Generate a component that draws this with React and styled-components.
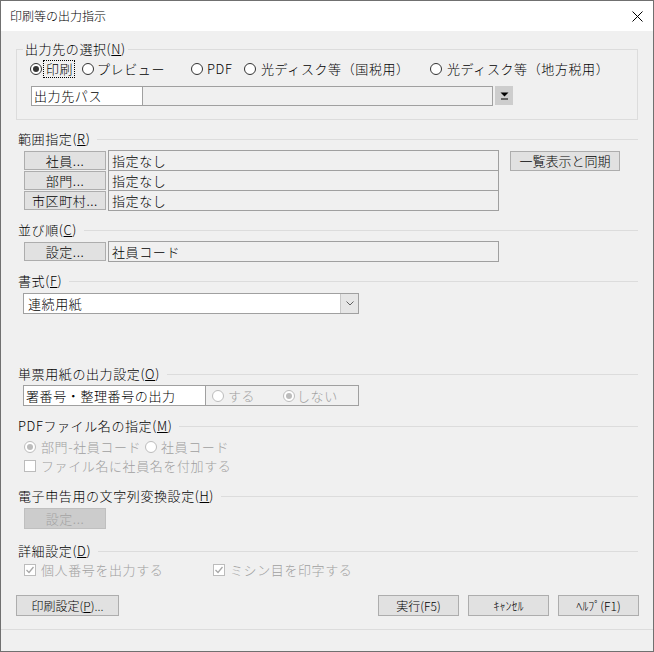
import React from 'react';
import styled, { createGlobalStyle } from 'styled-components';

const FONT = `"Noto Sans CJK JP", "Noto Sans", sans-serif`;

const GlobalStyle = createGlobalStyle`
  html, body { margin: 0; padding: 0; background: #ffffff; }
  body { font-family: ${FONT}; }
  *, *::before, *::after { box-sizing: border-box; }
`;

const Window = styled.div`
  width: 654px;
  height: 652px;
  border: 1px solid #707070;
  display: flex;
  flex-direction: column;
  background: #f0f0f0;
  font-family: ${FONT};
  font-size: 13px;
  font-weight: 300;
  line-height: 16px;
  letter-spacing: 0.6px;
  color: #000;
`;

const TitleBar = styled.div`
  height: 30px;
  flex: none;
  background: #ffffff;
  display: flex;
  align-items: center;
  justify-content: space-between;
  padding: 0 10px 0 9px;
`;

const Title = styled.span`
  font-size: 12px;
  letter-spacing: 0;
`;

const Content = styled.div`
  flex: 1;
  display: flex;
  flex-direction: column;
  padding: 0 15px;
`;

const Group = styled.fieldset`
  margin: 10px 0 0;
  padding: 0;
  min-width: 0;
  border: 1px solid #dcdcdc;
`;

const Legend = styled.legend`
  margin-left: 6px;
  padding: 0 2px;
  line-height: 16px;
`;

const GroupInner = styled.div`
  padding: 4px 0 13px 13px;
  display: flex;
  flex-direction: column;
`;

const OptionRow = styled.div`
  display: flex;
  align-items: center;
  height: 16px;
  margin: ${p => p.$mt ?? 0}px 0 0 ${p => p.$ml ?? 0}px;
`;

const Option = styled.label`
  display: inline-flex;
  align-items: center;
  flex: none;
  gap: ${p => p.$gap ?? 4}px;
  width: ${p => (p.$w ? `${p.$w}px` : 'auto')};
  color: ${p => (p.$disabled ? '#a0a0a0' : '#000')};
  white-space: nowrap;
`;

const RadioCircle = styled.span`
  width: 12px;
  height: 12px;
  flex: none;
  border-radius: 50%;
  border: 1px solid ${p => (p.$disabled ? '#bcbcbc' : '#333333')};
  background: #ffffff;
  display: inline-flex;
  align-items: center;
  justify-content: center;
  &::after {
    content: '';
    width: 6px;
    height: 6px;
    border-radius: 50%;
    background: ${p => (p.$disabled ? '#bcbcbc' : '#333333')};
    display: ${p => (p.$checked ? 'block' : 'none')};
  }
`;

const CheckBox = styled.span`
  width: 12px;
  height: 12px;
  flex: none;
  border: 1px solid ${p => (p.$disabled ? '#bcbcbc' : '#333333')};
  background: #ffffff;
  display: inline-flex;
  align-items: center;
  justify-content: center;
`;

const Focus = styled.span`
  outline: 1px dotted #000;
  outline-offset: 0;
  padding: 0 1px 0 2px;
`;

const PathRow = styled.div`
  display: flex;
  align-items: flex-start;
  margin: 9px 0 0 1px;
  height: 20px;
`;

const PathLabel = styled.div`
  width: 112px;
  height: 20px;
  background: #ffffff;
  border: 1px solid #a0a0a0;
  padding-left: 2px;
  display: flex;
  align-items: center;
`;

const PathField = styled.div`
  width: 351px;
  height: 20px;
  margin-left: -1px;
  background: #f0f0f0;
  border: 1px solid #a0a0a0;
`;

const PathDrop = styled.div`
  width: 18px;
  height: 19px;
  margin-left: 2px;
  background: #cdcdcd;
  display: flex;
  align-items: center;
  justify-content: center;
`;

const SectionHeader = styled.div`
  display: flex;
  align-items: center;
  height: 16px;
  margin: ${p => p.$mt}px 0 0 2px;
  white-space: nowrap;
  &::after {
    content: '';
    flex: 1;
    height: 1px;
    background: #dcdcdc;
    margin-left: 7px;
  }
`;

const RangeArea = styled.div`
  display: flex;
  align-items: flex-start;
  margin: 3px 0 0 8px;
`;

const RangeTable = styled.div`
  display: flex;
  flex-direction: column;
`;

const RangeRow = styled.div`
  display: flex;
  align-items: center;
  height: 21px;
  & + & { margin-top: -1px; }
`;

const PickButton = styled.div`
  width: 82px;
  height: 19px;
  background: #e1e1e1;
  border: 1px solid #adadad;
  display: flex;
  align-items: center;
  justify-content: center;
`;

const Field = styled.div`
  width: 391px;
  height: 21px;
  margin-left: 2px;
  background: #f0f0f0;
  border: 1px solid #a0a0a0;
  padding-left: 3px;
  display: flex;
  align-items: center;
`;

const SyncButton = styled.div`
  width: 110px;
  height: 20px;
  margin: 1px 0 0 11px;
  background: #e1e1e1;
  border: 1px solid #adadad;
  display: flex;
  align-items: center;
  justify-content: center;
  letter-spacing: 0;
`;

const Select = styled.div`
  width: 336px;
  height: 21px;
  margin: 4px 0 0 7px;
  background: #ffffff;
  border: 1px solid #a0a0a0;
  display: flex;
  align-items: stretch;
`;

const SelectText = styled.div`
  flex: 1;
  padding-left: 4px;
  display: flex;
  align-items: center;
`;

const SelectArrow = styled.div`
  width: 18px;
  background: #e6e6e6;
  border-left: 1px solid #c8c8c8;
  display: flex;
  align-items: center;
  justify-content: center;
`;

const SlipRow = styled.div`
  display: flex;
  width: 336px;
  height: 21px;
  margin: 3px 0 0 7px;
`;

const SlipLabel = styled.div`
  width: 183px;
  background: #ffffff;
  border: 1px solid #a0a0a0;
  padding-left: 2px;
  display: flex;
  align-items: center;
`;

const SlipOptions = styled.div`
  flex: 1;
  margin-left: -1px;
  border: 1px solid #a0a0a0;
  background: #f0f0f0;
  display: flex;
  align-items: center;
  padding-left: 6px;
`;

const DisabledButton = styled.div`
  width: 82px;
  height: 21px;
  margin: 4px 0 0 8px;
  background: #cccccc;
  border: 1px solid #bfbfbf;
  color: #a3a3a3;
  display: flex;
  align-items: center;
  justify-content: center;
`;

const Footer = styled.div`
  display: flex;
  justify-content: space-between;
  margin-top: 17px;
`;

const FooterGroup = styled.div`
  display: flex;
  gap: 9px;
  margin-right: -1px;
`;

const DialogButton = styled.div`
  width: ${p => p.$w ?? 81}px;
  height: 21px;
  background: #e1e1e1;
  border: 1px solid #adadad;
  display: flex;
  align-items: center;
  justify-content: center;
  font-size: 12px;
  letter-spacing: 0;
`;

const StatusBar = styled.div`
  height: 22px;
  flex: none;
  border-top: 1px solid #dcdcdc;
`;

const Radio = ({ checked, disabled, children, w, gap, focus }) => (
  <Option $w={w} $gap={gap} $disabled={disabled}>
    <RadioCircle $checked={checked} $disabled={disabled} />
    {focus ? <Focus>{children}</Focus> : children}
  </Option>
);

const Check = ({ checked, disabled, children, w, gap }) => (
  <Option $w={w} $gap={gap} $disabled={disabled}>
    <CheckBox $disabled={disabled}>
      {checked && (
        <svg width="10" height="10" viewBox="0 0 10 10">
          <polyline points="1.5,5 4,7.5 8.5,2" fill="none" stroke={disabled ? '#a8a8a8' : '#000'} strokeWidth="1.3" />
        </svg>
      )}
    </CheckBox>
    {children}
  </Option>
);

export default function App() {
  return (
    <>
      <GlobalStyle />
      <Window>
        <TitleBar>
          <Title>印刷等の出力指示</Title>
          <svg width="11" height="11" viewBox="0 0 11 11">
            <line x1="0.5" y1="0.5" x2="10.5" y2="10.5" stroke="#000" strokeWidth="1" />
            <line x1="10.5" y1="0.5" x2="0.5" y2="10.5" stroke="#000" strokeWidth="1" />
          </svg>
        </TitleBar>
        <Content>
          <Group>
            <Legend>出力先の選択(<u>N</u>)</Legend>
            <GroupInner>
              <OptionRow>
                <Radio checked w={52} gap={2} focus>印刷</Radio>
                <Radio w={109} gap={3}>プレビュー</Radio>
                <Radio w={53} gap={4}>PDF</Radio>
                <Radio w={186} gap={5}>光ディスク等（国税用）</Radio>
                <Radio gap={5}>光ディスク等（地方税用）</Radio>
              </OptionRow>
              <PathRow>
                <PathLabel>出力先パス</PathLabel>
                <PathField />
                <PathDrop>
                  <svg width="9" height="8" viewBox="0 0 9 8">
                    <polygon points="0.5,0.5 8.5,0.5 4.5,4.5" fill="#000" />
                    <line x1="1" y1="7" x2="8" y2="7" stroke="#000" strokeWidth="1" />
                  </svg>
                </PathDrop>
              </PathRow>
            </GroupInner>
          </Group>

          <SectionHeader $mt={11}>範囲指定(<u>R</u>)</SectionHeader>
          <RangeArea>
            <RangeTable>
              <RangeRow>
                <PickButton>社員...</PickButton>
                <Field>指定なし</Field>
              </RangeRow>
              <RangeRow>
                <PickButton>部門...</PickButton>
                <Field>指定なし</Field>
              </RangeRow>
              <RangeRow>
                <PickButton>市区町村...</PickButton>
                <Field>指定なし</Field>
              </RangeRow>
            </RangeTable>
            <SyncButton>一覧表示と同期</SyncButton>
          </RangeArea>

          <SectionHeader $mt={11}>並び順(<u>C</u>)</SectionHeader>
          <RangeArea>
            <RangeRow>
              <PickButton>設定...</PickButton>
              <Field>社員コード</Field>
            </RangeRow>
          </RangeArea>

          <SectionHeader $mt={11}>書式(<u>F</u>)</SectionHeader>
          <Select>
            <SelectText>連続用紙</SelectText>
            <SelectArrow>
              <svg width="8" height="5" viewBox="0 0 8 5">
                <polyline points="0.5,0.5 4,4 7.5,0.5" fill="none" stroke="#606060" strokeWidth="1" />
              </svg>
            </SelectArrow>
          </Select>

          <SectionHeader $mt={52}>単票用紙の出力設定(<u>O</u>)</SectionHeader>
          <SlipRow>
            <SlipLabel>署番号・整理番号の出力</SlipLabel>
            <SlipOptions>
              <Radio disabled w={71} gap={4}>する</Radio>
              <Radio disabled checked gap={2}>しない</Radio>
            </SlipOptions>
          </SlipRow>

          <SectionHeader $mt={12}>PDFファイル名の指定(<u>M</u>)</SectionHeader>
          <OptionRow $mt={5} $ml={8}>
            <Radio disabled checked w={121} gap={5}>部門-社員コード</Radio>
            <Radio disabled gap={4}>社員コード</Radio>
          </OptionRow>
          <OptionRow $mt={3} $ml={8}>
            <Check disabled gap={5}>ファイル名に社員名を付加する</Check>
          </OptionRow>

          <SectionHeader $mt={14}>電子申告用の文字列変換設定(<u>H</u>)</SectionHeader>
          <DisabledButton>設定...</DisabledButton>

          <SectionHeader $mt={14}>詳細設定(<u>D</u>)</SectionHeader>
          <OptionRow $mt={3} $ml={8}>
            <Check disabled checked w={189} gap={5}>個人番号を出力する</Check>
            <Check disabled checked gap={5}>ミシン目を印字する</Check>
          </OptionRow>

          <Footer>
            <DialogButton $w={103}>印刷設定(<u>P</u>)...</DialogButton>
            <FooterGroup>
              <DialogButton>実行(F5)</DialogButton>
              <DialogButton>ｷｬﾝｾﾙ</DialogButton>
              <DialogButton>ﾍﾙﾌﾟ(F1)</DialogButton>
            </FooterGroup>
          </Footer>
        </Content>
        <StatusBar />
      </Window>
    </>
  );
}
